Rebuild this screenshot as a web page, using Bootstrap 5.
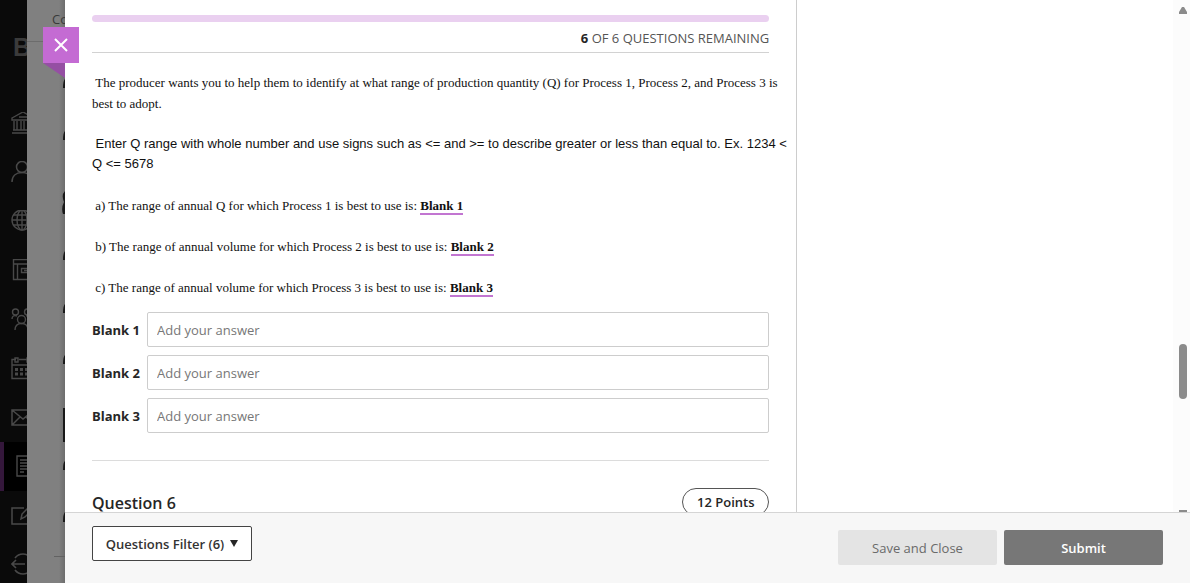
<!DOCTYPE html>
<html lang="en">
<head>
<meta charset="utf-8">
<meta name="viewport" content="width=device-width, initial-scale=1">
<title>Assessment</title>
<link href="https://cdn.jsdelivr.net/npm/bootstrap@5.3.0/dist/css/bootstrap.min.css" rel="stylesheet">
<style>
  body { font-family: "Open Sans", "Noto Sans", sans-serif; font-size: 13px; line-height: 20px; color: #262626; background: #fff; }
  .rail { flex: 0 0 27px; background: #0a0a0a; padding-top: 26px; }
  .rail-logo { height: 73px; padding-left: 13px; font: 700 25px/42px "Liberation Sans", sans-serif; color: #3b3b3b; }
  .rail-item { height: 49px; padding: 13px 0 0 11px; color: #494949; }
  .rail-item.current { background: #000; padding-left: 10px; border-left: 4px solid #34173b; }
  .rail-item svg, .underlay-art { display: block; }
  .underlay { flex: 0 0 38px; background: linear-gradient(90deg, #808080 32px, #6d6d6d 38px); }
  .underlay-title { height: 42px; padding: 9px 0 0 25px; border-bottom: 1px solid #6c6c6c; color: #3a3a3a; white-space: nowrap; }
  .underlay-art { color: #181818; }
  .sheet { min-width: 0; }
  .close-tab { left: -22px; top: 27px; width: 36px; height: 36px; background: #c46bd3; z-index: 3; }
  .close-fold { left: -22px; top: 63px; z-index: 3; }
  .question-col { width: calc(65% + 1px); padding: 15px 27px 0; border-right: 1px solid #cdcdcd; }
  .meter { height: 7px; border-radius: 4px; background: #ead0f0; }
  .remaining { padding: 6px 0 4px; border-bottom: 1px solid #d2d2d2; color: #555; }
  .remaining strong { color: #262626; }
  .prompt { padding-top: 19px; color: #111; }
  .prompt p { line-height: 21px; margin-bottom: 20px; }
  .serif-text { font-family: "Liberation Serif", serif; font-size: 13px; }
  .prompt .sans-text { font-family: "Liberation Sans", sans-serif; font-size: 13px; line-height: 20px; margin-bottom: 21px; }
  .prompt p:last-child { margin-bottom: 14px; }
  .blank-ref { border-bottom: 2px solid #c275d1; }
  .answer-row label { flex: 0 0 55px; font-weight: 700; }
  .answer-row .form-control { height: 35px; padding: 0 9px; border: 1px solid #cdcdcd; border-radius: 2px; font-size: 13px; }
  .form-control::placeholder { color: #777; }
  .answers { gap: 8px; padding-bottom: 27px; border-bottom: 1px solid #dcdcdc; }
  .next-question { padding-top: 27px; }
  .next-question h2 { font-size: 16px; line-height: 30px; font-weight: 600; }
  .points { height: 28px; width: 87px; border: 1px solid #555; border-radius: 14px; font-weight: 600; line-height: 26px; }
  .scroll-track { width: 17px; background: #fcfcfc; padding: 7px 3px 0 0; }
  .scroll-thumb { width: 8px; height: 55px; border-radius: 4px; background: #8b8b8b; }
  .space-above { flex: 3 0 0; }
  .space-below { flex: 1 0 0; }
  .sheet-footer { flex: 0 0 71px; padding: 13px 27px 0; border-top: 1px solid #d5d5d5; background: #f7f7f7; }
  .sheet-footer .btn { height: 35px; font-size: 13px; line-height: 20px; padding: 0; border-radius: 2px; width: 159px; }
  .sheet-footer .filter-btn { gap: 6px; width: 160px; background: #fff; border: 1px solid #444; font-weight: 600; color: #333; }
  .footer-actions { gap: 7px; }
  .sheet-footer .save-btn { background: #e4e4e4; color: #6a6a6a; }
  .sheet-footer .submit-btn { background: #777; color: #fff; font-weight: 600; }
</style>
</head>
<body>
<div class="d-flex vh-100 overflow-hidden">
  <nav class="rail overflow-hidden" aria-label="Main">
    <div class="rail-logo">B</div>
    <div class="rail-item"><svg width="24" height="24" fill="none" stroke="currentColor" stroke-width="1.4"><path d="M1 6 12 0l11 6v2H1zM3 9v9M6 9v9M10 9v9M13 9v9M17 9v9M21 9v9M2 18h20M1 21h22M8 5h8"/></svg></div>
    <div class="rail-item"><svg width="24" height="24" fill="none" stroke="currentColor" stroke-width="1.5"><circle cx="11" cy="6" r="5.5"/><path d="M1 21c0-6 4-9.500 10-9.500s10 3.500 10 9.500"/></svg></div>
    <div class="rail-item"><svg width="24" height="24" fill="none" stroke="currentColor" stroke-width="1.4"><circle cx="11" cy="10" r="10"/><ellipse cx="11" cy="10" rx="5" ry="10"/><path d="M11 0v20M1 10h20M2 5h18M2 15h18"/></svg></div>
    <div class="rail-item"><svg width="24" height="24" fill="none" stroke="currentColor" stroke-width="1.4"><path d="M2.500.500h20v20h-20zM6.500 5v15.500M2.500 5h20M10.500 9.500h9v4h-9zM13 11.500h4"/></svg></div>
    <div class="rail-item"><svg width="24" height="24" fill="none" stroke="currentColor" stroke-width="1.4"><circle cx="4.500" cy="4" r="3"/><circle cx="16.500" cy="4" r="3"/><circle cx="10.500" cy="11.500" r="4"/><path d="M1 11c0-3 2-4 5-3M20 11c0-3-2-4-5-3M4 22c0-4 2-6.500 6.500-6.500S17 18 17 22"/></svg></div>
    <div class="rail-item"><svg width="24" height="24" fill="none" stroke="currentColor" stroke-width="1.4"><path d="M5 2.500H1v19h22v-19h-3M8 2.500h8M1 8h22M4 1h3v4H4zM16 1h3v4h-3z"/><path d="M4 12.500h3m2 0h3m2 0h3M4 17h3m2 0h3m2 0h3" stroke-width="3"/></svg></div>
    <div class="rail-item"><svg width="24" height="24" fill="none" stroke="currentColor" stroke-width="1.5"><path d="M1 4h22v15H1zM1 4l11 9 11-9M1 19l8-8M23 19l-8-8"/></svg></div>
    <div class="rail-item current"><svg width="24" height="24" fill="none" stroke="currentColor" stroke-width="1.4"><path d="M3 1h17v20H3zM6 5h11M6 8h7M6 11h11M6 14h7M6 17h4"/></svg></div>
    <div class="rail-item"><svg width="24" height="24" fill="none" stroke="currentColor" stroke-width="1.5"><path d="M13 4H1v16h18v-8M10 15l1-5 9-9 3 3-9 9z"/></svg></div>
    <div class="rail-item"><svg width="24" height="24" fill="none" stroke="currentColor" stroke-width="1.6"><path d="M1 11h13M5 7l-4 4 4 4M4 5a10 10 0 0 1 16 0M4 17a10 10 0 0 0 16 0"/></svg></div>
  </nav>
  <div class="underlay overflow-hidden" aria-hidden="true">
    <div class="underlay-title">Content</div>
    <svg class="underlay-art" width="38" height="540" viewBox="0 42 38 540" fill="currentColor"><path d="M38 79q-2 2-2 9h2zM38 131q-2 2-2 9h2zM38 191q-4 4-1 11-3 6-1 12h2zM38 251q-2 2-2 9h2zM38 304q-2 2-2 9h2zM38 355q-2 2-2 9h2zM36 408h2v34h-2zM38 461q-2 1-2 9h2zM38 512q-2 2-2 10h2z"/><path d="M27 556h11v1H27z" fill="#626262"/></svg>
  </div>
  <section class="sheet flex-grow-1 d-flex flex-column position-relative">
    <button type="button" class="close-tab position-absolute border-0 p-0 d-flex align-items-center justify-content-center" aria-label="Close">
      <svg width="14" height="14" stroke="#fff" stroke-width="2"><path d="M1 1l12 12M13 1 1 13"/></svg>
    </button>
    <svg class="close-fold position-absolute" width="22" height="15" aria-hidden="true"><path d="M0 0h22v15z" fill="#954fa3"/></svg>
    <main class="d-flex flex-grow-1 overflow-hidden">
      <div class="question-col">
        <div class="meter"></div>
        <div class="remaining text-end"><strong>6</strong> OF 6 QUESTIONS REMAINING</div>
        <div class="prompt serif-text">
          <p class="text-nowrap">&nbsp;The producer wants you to help them to identify at what range of production quantity (Q) for Process 1, Process 2, and Process 3 is<br>best to adopt.</p>
          <p class="sans-text text-nowrap">&nbsp;Enter Q range with whole number and use signs such as &lt;= and &gt;= to describe greater or less than equal to. Ex. 1234 &lt;<br>Q &lt;= 5678</p>
          <p>&nbsp;a) The range of annual Q for which Process 1 is best to use is: <strong class="blank-ref">Blank 1</strong></p>
          <p>&nbsp;b) The range of annual volume for which Process 2 is best to use is: <strong class="blank-ref">Blank 2</strong></p>
          <p>&nbsp;c) The range of annual volume for which Process 3 is best to use is: <strong class="blank-ref">Blank 3</strong></p>
        </div>
        <div class="answers d-flex flex-column">
          <div class="answer-row d-flex align-items-center"><label for="blank1">Blank 1</label><input id="blank1" class="form-control" placeholder="Add your answer"></div>
          <div class="answer-row d-flex align-items-center"><label for="blank2">Blank 2</label><input id="blank2" class="form-control" placeholder="Add your answer"></div>
          <div class="answer-row d-flex align-items-center"><label for="blank3">Blank 3</label><input id="blank3" class="form-control" placeholder="Add your answer"></div>
        </div>
        <div class="next-question d-flex justify-content-between align-items-start">
          <h2 class="m-0">Question 6</h2>
          <span class="points text-center">12 Points</span>
        </div>
      </div>
      <div class="scroll-track ms-auto d-flex flex-column align-items-end" aria-hidden="true">
        <svg width="8" height="7"><path d="M3 0h2l3 5v2H0V5z" fill="#8b8b8b"/></svg>
        <div class="space-above"></div>
        <div class="scroll-thumb"></div>
        <div class="space-below"></div>
        <svg width="8" height="3"><path d="M0 1h8v2H0z" fill="#8b8b8b"/></svg>
      </div>
    </main>
    <footer class="sheet-footer d-flex align-items-start">
      <button type="button" class="btn filter-btn d-flex align-items-center justify-content-center">Questions Filter (6)<svg width="8" height="7" aria-hidden="true"><path d="M0 0h8L4 7z" fill="#262626"/></svg></button>
      <div class="footer-actions d-flex ms-auto mt-1"><button type="button" class="btn save-btn">Save and Close</button><button type="button" class="btn submit-btn">Submit</button></div>
    </footer>
  </section>
</div>
<script src="https://cdn.jsdelivr.net/npm/bootstrap@5.3.0/dist/js/bootstrap.bundle.min.js"></script>
</body>
</html>
